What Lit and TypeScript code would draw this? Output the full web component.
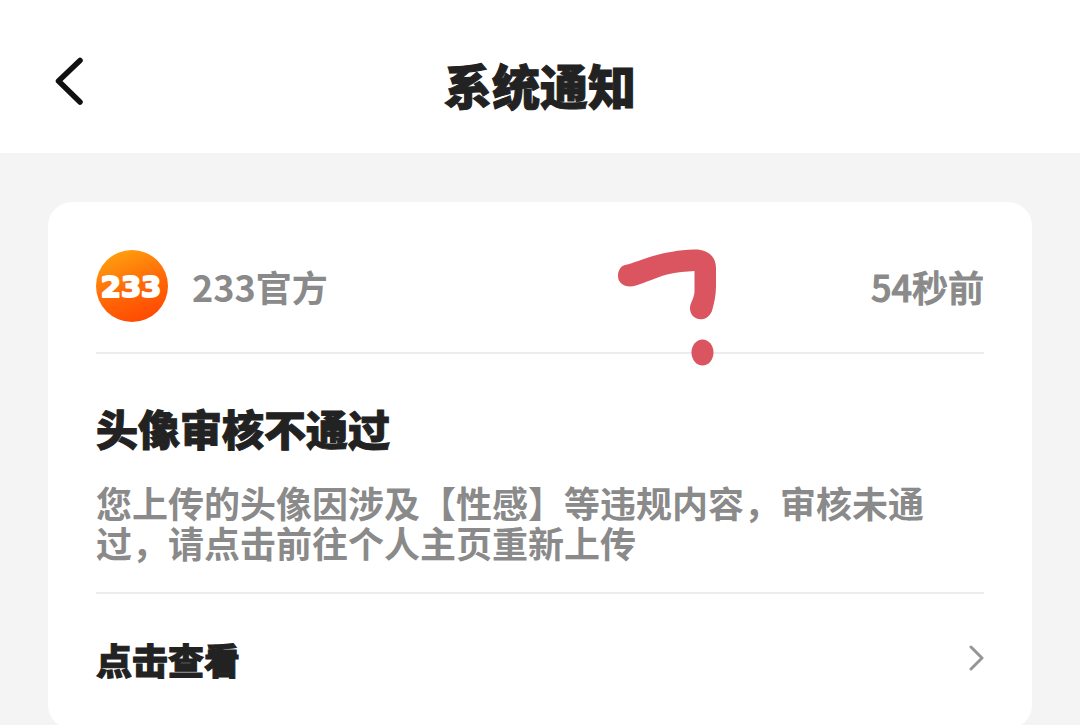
import { LitElement, html, css } from "lit";
import { customElement, property } from "lit/decorators.js";

@customElement("brand-avatar")
class BrandAvatar extends LitElement {
  static styles = css`
    :host {
      display: block;
      width: 72px;
      height: 72px;
      flex: none;
    }
    .art {
      display: block;
      width: 100%;
      height: 100%;
    }
    .digits {
      font-family: "DejaVu Sans", "Open Sans", sans-serif;
      font-size: 29px;
      font-weight: 700;
      fill: #fff;
      stroke: #fff;
      stroke-width: 2px;
      stroke-linejoin: round;
    }
  `;

  render() {
    return html`
      <svg class="art" viewBox="0 0 72 72" role="img" aria-label="233">
        <defs>
          <linearGradient id="glow" x1="0.2" y1="0" x2="0.6" y2="1">
            <stop offset="0" stop-color="#ffa30f" />
            <stop offset="0.55" stop-color="#ff6a08" />
            <stop offset="1" stop-color="#ff4a02" />
          </linearGradient>
        </defs>
        <circle cx="36" cy="36" r="36" fill="url(#glow)" />
        <text class="digits" x="35" y="47" text-anchor="middle">233</text>
      </svg>
    `;
  }
}

@customElement("notice-card")
class NoticeCard extends LitElement {
  @property() sender = "";
  @property() time = "";
  @property() heading = "";
  @property() message = "";
  @property() action = "";

  static styles = css`
    :host {
      display: block;
    }
    .card {
      position: relative;
      background: #fff;
      border-radius: 24px;
      padding: 0 48px;
      color: #8a8a8a;
      font-size: 36px;
      line-height: 40px;
    }
    .top {
      display: flex;
      align-items: center;
      gap: 24px;
      padding: 48px 0 30px;
      border-bottom: 2px solid #ececee;
    }
    .sender {
      flex: 1;
      font-weight: 700;
    }
    .time {
      font-weight: 500;
      -webkit-text-stroke: 1px #8a8a8a;
    }
    .body {
      padding: 46px 0 30px;
      border-bottom: 2px solid #ececee;
    }
    .heading {
      margin: 0 0 26px;
      color: #222;
      font-size: 42px;
      line-height: 56px;
      font-weight: 900;
      -webkit-text-stroke: 1px #222;
    }
    .message {
      margin: 0;
      font-weight: 700;
    }
    .action {
      display: flex;
      align-items: center;
      justify-content: space-between;
      padding: 45px 0 50px;
      color: #222;
      font-weight: 900;
      text-decoration: none;
      -webkit-text-stroke: 1px #222;
    }
    .chevron {
      display: block;
      width: 16px;
      height: 28px;
    }
    .doodle {
      position: absolute;
      top: 46px;
      left: 568px;
      width: 102px;
      height: 120px;
      pointer-events: none;
    }
  `;

  render() {
    return html`
      <article class="card">
        <header class="top">
          <brand-avatar></brand-avatar>
          <span class="sender">${this.sender}</span>
          <time class="time">${this.time}</time>
        </header>
        <section class="body">
          <h2 class="heading">${this.heading}</h2>
          <p class="message">${this.message}</p>
        </section>
        <a class="action" href="#profile">
          <span>${this.action}</span>
          <svg class="chevron" viewBox="0 0 16 28" aria-hidden="true">
            <path d="M3 2 L14 13 L3 24" fill="none" stroke="#96969a" stroke-width="3" stroke-linecap="round" stroke-linejoin="round" />
          </svg>
        </a>
        <svg class="doodle" viewBox="0 0 102 120" aria-hidden="true">
          <path
            fill="#da5560"
            d="M9 17 C18 15 26 11 37 8 C50 4.500 62 2 78 1.500 C92 1 100 9 100 20 L100 38 C100 46 98.500 54 96.500 61 C93 76 73 74 74 59 C75 53 78.500 50 78.500 43 L78.500 23 C70 23.500 61 24 51 26.500 C39 30 30 34.500 20 37.500 C10 40.500 2 36 2 28 C2 22 5 18 9 17 Z"
          />
          <ellipse cx="86.500" cy="104.500" rx="11" ry="13" fill="#da5560" />
        </svg>
      </article>
    `;
  }
}

@customElement("app-root")
class AppRoot extends LitElement {
  static styles = css`
    :host {
      display: block;
      min-height: 100vh;
      background: #f4f4f5;
      font-family: "Noto Sans CJK SC", sans-serif;
    }
    .bar {
      display: grid;
      grid-template-columns: 48px 1fr 48px;
      align-items: center;
      padding: 48px 48px 33px;
      background: #fff;
    }
    .back {
      display: block;
      width: 42px;
      height: 60px;
      padding: 0;
      border: 0;
      background: none;
    }
    .arrow {
      display: block;
      width: 42px;
      height: 60px;
    }
    .title {
      margin: 0;
      color: #222;
      font-size: 48px;
      line-height: 72px;
      font-weight: 900;
      text-align: center;
      -webkit-text-stroke: 1px #222;
    }
    .list {
      padding: 49px 48px 0;
    }
  `;

  render() {
    return html`
      <header class="bar">
        <button class="back" type="button" aria-label="返回">
          <svg class="arrow" viewBox="0 0 42 60" aria-hidden="true">
            <path d="M32 6.500 L10.500 27 L32 48" fill="none" stroke="#111" stroke-width="5.500" stroke-linecap="round" stroke-linejoin="round" />
          </svg>
        </button>
        <h1 class="title">系统通知</h1>
      </header>
      <main class="list">
        <notice-card
          lang="zh-CN"
          sender="233官方"
          time="54秒前"
          heading="头像审核不通过"
          message="您上传的头像因涉及【性感】等违规内容，审核未通过，请点击前往个人主页重新上传"
          action="点击查看"
        ></notice-card>
      </main>
    `;
  }
}
